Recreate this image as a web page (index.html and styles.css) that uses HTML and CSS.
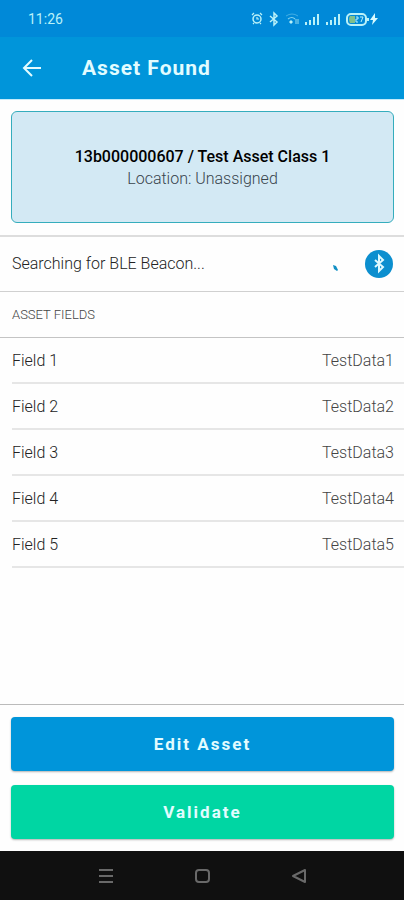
FILE: index.html
```html
<!DOCTYPE html>
<html lang="en">

<head>
    <meta charset="UTF-8">
    <meta name="viewport" content="width=device-width, initial-scale=1.0">
    <title>Asset Found</title>
    <link rel="stylesheet" href="styles.css">
</head>

<body>

    <!-- Status bar -->
    <div class="status-bar">
        <span class="clock">11:26</span>
        <svg class="status-icons" width="130" height="16" viewBox="0 0 130 16" fill="none" stroke="#b9f1f8" aria-hidden="true">
            <!-- alarm -->
            <circle cx="7" cy="8" r="4" stroke-width="1.5"/>
            <path d="M2 4l2-2M12 4l-2-2M7 6v2h2M4 12l-1 1M10 12l1 1" stroke-width="1.2"/>
            <!-- bluetooth -->
            <path d="M20 5l7 6-3 3V2l3 3-7 6" stroke-width="1.5"/>
            <!-- wifi -->
            <path d="M36 5q6-4 12 0" stroke-width="1" opacity=".35"/>
            <path d="M38 8q4-3 7 0" stroke-width="1.2" opacity=".7"/>
            <path d="M39 11l2-2 2 2-2 2z" fill="#b9f1f8" stroke="none"/>
            <path d="M46 8v5M48 8v5" stroke-width="1" opacity=".8"/>
            <!-- signal -->
            <path d="M56 11v3M60 9v5M64 6v8M68 3v11" stroke-width="2"/>
            <path d="M77 11v3M81 9v5M85 6v8M89 3v11" stroke-width="2"/>
            <!-- battery -->
            <rect x="97" y="3" width="19" height="11" rx="4" stroke-width="2"/>
            <path d="M100 5h5v7h-5q-2-4 0-7z" fill="#7fbf8c" stroke="none"/>
            <path d="M106 6h2v2h-2v3h2M110 6h3l-2 5" stroke-width="1"/>
            <path d="M118 7v3" stroke-width="2"/>
            <path d="M125 2l-5 7h3l-1 5 6-7h-3z" fill="#d8fbff" stroke="none"/>
        </svg>
    </div>

    <!-- App bar -->
    <header class="app-bar">
        <button class="back-button" aria-label="Back">
            <svg width="20" height="20" viewBox="0 0 20 20" fill="none" stroke="#e2fcff" stroke-width="2">
                <path d="M19 10H3M10 2L2 10l8 8"/>
            </svg>
        </button>
        <h1>Asset Found</h1>
    </header>

    <main>
        <div class="asset-section">
            <div class="asset-card">
                <h2>13b000000607 / Test Asset Class 1</h2>
                <p>Location: Unassigned</p>
            </div>
        </div>

        <!-- Beacon search -->
        <div class="beacon-row">
            <span class="beacon-text">Searching for BLE Beacon...</span>
            <svg class="spinner" width="20" height="20" viewBox="0 0 20 20" aria-hidden="true">
                <path d="M6 11l3 1 2 4-1 1-3-2z" fill="#118fc4"/>
            </svg>
            <button class="beacon-button" aria-label="Bluetooth">
                <svg width="28" height="28" viewBox="0 0 28 28" fill="none" stroke="#dffaff" stroke-width="2">
                    <path d="M10 10l8 7-4 4V6l4 4-8 7"/>
                </svg>
            </button>
        </div>

        <!-- Asset fields -->
        <h3 class="list-header">ASSET FIELDS</h3>
        <table class="fields">
            <tr>
                <th scope="row">Field 1</th>
                <td>TestData1</td>
            </tr>
            <tr>
                <th scope="row">Field 2</th>
                <td>TestData2</td>
            </tr>
            <tr>
                <th scope="row">Field 3</th>
                <td>TestData3</td>
            </tr>
            <tr>
                <th scope="row">Field 4</th>
                <td>TestData4</td>
            </tr>
            <tr>
                <th scope="row">Field 5</th>
                <td>TestData5</td>
            </tr>
        </table>
    </main>

    <!-- Actions -->
    <footer class="actions">
        <button class="button edit">Edit Asset</button>
        <button class="button validate">Validate</button>
    </footer>

    <!-- System navigation -->
    <nav class="system-nav">
        <button aria-label="Recent apps">
            <svg width="16" height="16" viewBox="0 0 16 16" fill="none" stroke="#696969" stroke-width="2">
                <path d="M1 2h14M1 8h14M1 14h14"/>
            </svg>
        </button>
        <button aria-label="Home">
            <svg width="16" height="16" viewBox="0 0 16 16" fill="none" stroke="#696969" stroke-width="2">
                <rect x="1" y="2" width="13" height="12" rx="3"/>
            </svg>
        </button>
        <button aria-label="Back">
            <svg width="16" height="16" viewBox="0 0 16 16" fill="none" stroke="#696969" stroke-width="2" stroke-linejoin="round">
                <path d="M14 2v12L2 8z"/>
            </svg>
        </button>
    </nav>

</body>
</html>
```
FILE: styles.css
```css
* {
    box-sizing: border-box;
}

body {
    margin: 0;
    min-height: 100vh;
    display: flex;
    flex-direction: column;
    background-color: #fefefe;
    color: #222;
    font-family: Roboto, sans-serif;
    font-size: 16px;
    font-weight: 300;
    line-height: 22px;
}

h1, h2, h3, p {
    margin: 0;
}

button {
    border: none;
    padding: 0;
    font-family: inherit;
    cursor: pointer;
}

svg {
    display: block;
}

/* Status bar */
.status-bar {
    height: 37px;
    padding: 0 24px 0 28px;
    display: flex;
    justify-content: space-between;
    align-items: center;
    background-color: #0089d8;
    color: #b9f1f8;
}

.clock {
    font-size: 14px;
    font-weight: 400;
}

/* App bar */
.app-bar {
    height: 63px;
    padding: 0 22px;
    display: flex;
    align-items: center;
    gap: 40px;
    background-color: #0095da;
    border-bottom: 1px solid #c4ebfb;
    color: #e2fcff;
}

.back-button {
    background: none;
}

.app-bar h1 {
    font-size: 21px;
    font-weight: 700;
    letter-spacing: 1px;
}

/* Content */
main {
    flex: 1;
}

.asset-section {
    padding: 11px 10px 12px 11px;
    border-bottom: 2px solid #ddd;
}

.asset-card {
    padding: 34px 12px 32px;
    border: 1px solid #35adbd;
    border-radius: 6px;
    background-color: #d3e9f4;
    text-align: center;
}

.asset-card h2 {
    font-size: 16px;
    font-weight: 500;
    color: #000;
}

.asset-card p {
    color: #38444c;
}

.beacon-row {
    height: 55px;
    padding: 0 11px 0 12px;
    display: flex;
    align-items: center;
    border-bottom: 1px solid #d0d0d0;
}

.beacon-text {
    flex: 1;
}

.spinner {
    margin-right: 18px;
}

.beacon-button {
    width: 28px;
    height: 28px;
    border-radius: 50%;
    background-color: #0c8fcf;
}

.list-header {
    padding: 12px 12px 11px;
    border-bottom: 1px solid #c4c4c4;
    font-size: 13px;
    font-weight: 300;
    color: #444;
}

.fields {
    width: calc(100% - 12px);
    margin-left: 12px;
    border-collapse: collapse;
}

.fields th,
.fields td {
    padding: 12px 0 10px;
    border-bottom: 2px solid #e6e6e6;
}

.fields th {
    font-weight: 300;
    text-align: left;
}

.fields td {
    padding-right: 10px;
    text-align: right;
    color: #444;
}

/* Actions */
.actions {
    padding: 12px 10px 12px 11px;
    display: flex;
    flex-direction: column;
    gap: 14px;
    border-top: 1px solid #bbb;
}

.button {
    height: 54px;
    border-radius: 4px;
    box-shadow: 0 1px 2px rgba(0, 0, 0, 0.3);
    color: #e2fcff;
    font-size: 17px;
    font-weight: 700;
    letter-spacing: 2px;
}

.edit {
    background-color: #0095da;
}

.validate {
    background-color: #00d6a3;
}

/* System navigation */
.system-nav {
    height: 49px;
    padding: 0 97px 0 98px;
    display: flex;
    justify-content: space-between;
    align-items: center;
    background-color: #101010;
}

.system-nav button {
    background: none;
}
```
